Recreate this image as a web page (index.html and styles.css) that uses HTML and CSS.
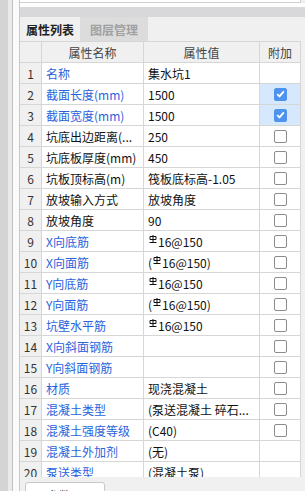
FILE: index.html
```html
<!DOCTYPE html>
<html lang="zh-CN">

<head>
  <meta charset="UTF-8">
  <meta name="viewport" content="width=device-width, initial-scale=1.0">
  <title>属性列表</title>
  <link rel="stylesheet" href="styles.css">
</head>

<body>
  <div class="app">
    <div class="rail"></div>
    <div class="rail-light"></div>
    <div class="gutter"></div>
    <div class="main">
      <div class="top-panel"></div>
      <div class="top-gap"></div>
      <div class="splitter"></div>
      <div class="tabs">
        <span class="tab active">属性列表</span>
        <span class="tab">图层管理</span>
      </div>
      <div class="grid-wrap">
        <div class="row head">
          <div class="cell num"></div>
          <div class="cell center">属性名称</div>
          <div class="cell center">属性值</div>
          <div class="cell center">附加</div>
        </div>
        <div id="rows"></div>
      </div>
      <div class="bottom">
        <span class="btn">参数图</span>
      </div>
    </div>
  </div>
  <script>
    // 属性列表数据: [名称, 值, 是否蓝色, 附加状态] 附加: 0 无, 1 未选, 2 已选
    const bar = '<svg class="bar3" width="8" height="8" viewBox="0 0 8 8"><path d="M4 0v7M1 1.5h6v3H1zM0.5 7.5h7" fill="none" stroke="#111" stroke-width="1"/></svg>';
    const data = [
      ["名称", "集水坑1", true, 0],
      ["截面长度(mm)", "1500", true, 2],
      ["截面宽度(mm)", "1500", true, 2],
      ["坑底出边距离(...", "250", false, 1],
      ["坑底板厚度(mm)", "450", false, 1],
      ["坑板顶标高(m)", "筏板底标高-1.05", false, 1],
      ["放坡输入方式", "放坡角度", false, 1],
      ["放坡角度", "90", false, 1],
      ["X向底筋", bar + "16@150", true, 1],
      ["X向面筋", "(" + bar + "16@150)", true, 1],
      ["Y向底筋", bar + "16@150", true, 1],
      ["Y向面筋", "(" + bar + "16@150)", true, 1],
      ["坑壁水平筋", bar + "16@150", true, 1],
      ["X向斜面钢筋", "", true, 1],
      ["Y向斜面钢筋", "", true, 1],
      ["材质", "现浇混凝土", true, 1],
      ["混凝土类型", "(泵送混凝土 碎石...", true, 1],
      ["混凝土强度等级", "(C40)", true, 1],
      ["混凝土外加剂", "(无)", true, 0],
      ["泵送类型", "(混凝土泵)", true, 0]
    ];

    document.getElementById("rows").innerHTML = data.map((item, i) => {
      const [name, value, blue, extra] = item;
      let box = "";
      if (extra === 1) box = '<span class="check"></span>';
      if (extra === 2) box = '<span class="check on"><svg width="9" height="8" viewBox="0 0 9 8"><path d="M1.2 4.2l2.3 2.2 4.3-5" fill="none" stroke="#fff" stroke-width="1.8"/></svg></span>';
      return `<div class="row">
        <div class="cell num">${i + 1}</div>
        <div class="cell${blue ? " blue" : ""}">${name}</div>
        <div class="cell">${value}</div>
        <div class="cell center${extra === 2 ? " picked" : ""}">${box}</div>
      </div>`;
    }).join("");
  </script>
</body>

</html>
```

FILE: styles.css
```css
* {
  padding: 0;
  margin: 0;
  box-sizing: border-box;
}

body {
  width: 305px;
  height: 491px;
  overflow: hidden;
  font-family: "Noto Sans CJK SC", "Noto Sans", sans-serif;
  font-size: 12px;
  color: #111;
  background: #f0f0f0;
}

.app {
  display: flex;
  height: 491px;
}

.rail {
  width: 8px;
  background: #d4d4d4;
}

.rail-light {
  width: 5px;
  background: #e9e9e9;
  border-right: 1px solid #c2c2c2;
}

.gutter {
  width: 7px;
  background: #fafafa;
  border-right: 1px solid #c8c8c8;
}

.main {
  flex: 1;
  display: flex;
  flex-direction: column;
  min-width: 0;
}

.top-panel {
  height: 3px;
  flex-shrink: 0;
  background: #fff;
  border-bottom: 1px solid #cfcfcf;
  margin-right: 4px;
  border-right: 1px solid #cfcfcf;
}

.top-gap {
  height: 4px;
  flex-shrink: 0;
  background: #fff;
}

.splitter {
  height: 10px;
  flex-shrink: 0;
  background: #d8d8da;
}

.tabs {
  height: 24px;
  flex-shrink: 0;
  display: flex;
  background: #f0f0f0;
}

.tab {
  display: flex;
  align-items: center;
  justify-content: center;
  width: 60px;
  font-weight: bold;
  color: #a0a0a0;
  background: #dcdcdc;
}

.tab + .tab {
  width: 68px;
}

.tab.active {
  color: #222;
  background: #f0f0f0;
}

.grid-wrap {
  height: 436px;
  flex-shrink: 0;
  overflow: hidden;
  width: 281px;
  background: #fff;
}

.row {
  display: grid;
  grid-template-columns: 22px 102px 116px 41px;
  height: 21px;
}

.head {
  background: #f0f0f0;
  color: #444;
  height: 22px;
  border-top: 1px solid #d6d6d6;
}

.cell {
  border-right: 1px solid #d6d6d6;
  border-bottom: 1px solid #d6d6d6;
  display: flex;
  align-items: center;
  padding-left: 4px;
  white-space: nowrap;
  overflow: hidden;
}

.center {
  justify-content: center;
  padding-left: 0;
}

.num {
  background: #f0f0f0;
  justify-content: center;
  padding-left: 0;
  color: #333;
}

.blue {
  color: #2a62dc;
}

.picked {
  background: #d6e8fc;
}

.check {
  width: 13px;
  height: 13px;
  border: 1px solid #8c8c8c;
  border-radius: 2px;
  background: #fff;
  display: flex;
  align-items: center;
  justify-content: center;
}

.check.on {
  border-color: #4f93ee;
  background: #4f93ee;
}

.bar3 {
  align-self: flex-start;
  margin-top: 4px;
  margin-right: 1px;
  margin-left: 1px;
}

.bottom {
  flex: 1;
  min-height: 0;
  overflow: hidden;
  padding: 5px 0 0 5px;
  background: #f0f0f0;
}

.btn {
  display: flex;
  justify-content: center;
  padding-top: 4px;
  width: 80px;
  height: 26px;
  background: #fff;
  border: 1px solid #c8c8c8;
  border-radius: 3px;
  color: #222;
}
```
